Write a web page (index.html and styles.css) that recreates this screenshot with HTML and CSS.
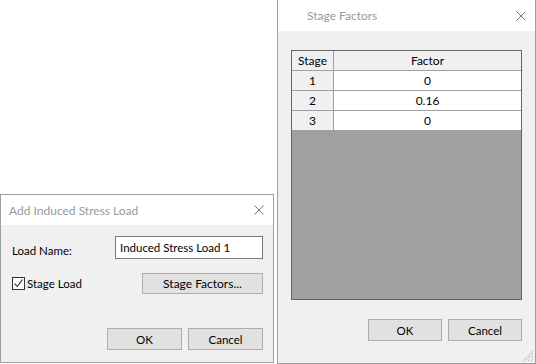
FILE: index.html
```html
<!DOCTYPE html>
<html lang="en">
<head>
    <meta charset="UTF-8">
    <title>Add Induced Stress Load</title>
    <link rel="stylesheet" href="styles.css">
</head>
<body>
    <div class="desktop">
        <div class="window load-window">
            <div class="titlebar">
                <span class="title">Add Induced Stress Load</span>
                <svg class="close" width="10" height="10" viewBox="0 0 10 10"><path d="M0.5 0.5 L9.5 9.5 M9.5 0.5 L0.5 9.5"/></svg>
            </div>
            <div class="body load-body">
                <div class="row name-row">
                    <label class="label">Load Name:</label>
                    <input class="field" type="text" value="Induced Stress Load 1">
                </div>
                <div class="row stage-row">
                    <label class="check">
                        <span class="box"><svg width="11" height="11" viewBox="0 0 11 11"><path d="M1.5 5.5 L4.2 8.5 L9.5 1.5"/></svg></span>
                        Stage Load
                    </label>
                    <button class="btn factors-btn">Stage Factors...</button>
                </div>
                <div class="actions">
                    <button class="btn">OK</button>
                    <button class="btn">Cancel</button>
                </div>
            </div>
        </div>

        <div class="window factors-window">
            <div class="titlebar factors-title">
                <span class="title">Stage Factors</span>
                <svg class="close" width="10" height="10" viewBox="0 0 10 10"><path d="M0.5 0.5 L9.5 9.5 M9.5 0.5 L0.5 9.5"/></svg>
            </div>
            <div class="body factors-body">
                <div class="grid-frame">
                    <div class="grid">
                        <div class="cell head">Stage</div>
                        <div class="cell head">Factor</div>
                        <div class="cell head">1</div>
                        <div class="cell">0</div>
                        <div class="cell head">2</div>
                        <div class="cell">0.16</div>
                        <div class="cell head">3</div>
                        <div class="cell">0</div>
                    </div>
                </div>
                <div class="actions">
                    <button class="btn">OK</button>
                    <button class="btn">Cancel</button>
                </div>
            </div>
            <svg class="grip" width="12" height="12" viewBox="0 0 12 12"><path d="M11 3 L3 11 M11 6 L6 11 M11 9 L9 11 M11 1 L1 11"/></svg>
        </div>
    </div>
</body>
</html>
```

FILE: styles.css
```css
body {
    margin: 0;
    background-color: #fff;
    font-family: Lato, "Noto Sans", sans-serif;
    font-size: 11.5px;
    color: #000;
}
.desktop {
    position: relative;
    width: 536px;
    height: 364px;
    overflow: hidden;
}
.window {
    position: absolute;
    box-sizing: border-box;
    background-color: #f0f0f0;
    border: 1px solid #9d9da5;
    display: flex;
    flex-direction: column;
}
.load-window {
    left: 0;
    top: 194px;
    width: 274px;
    height: 169px;
}
.factors-window {
    left: 277px;
    top: -1px;
    width: 259px;
    height: 365px;
}
.titlebar {
    height: 30px;
    background-color: #fff;
    display: flex;
    align-items: center;
    justify-content: space-between;
    padding: 0 9px 0 8px;
    flex-shrink: 0;
}
.factors-title {
    height: 31px;
    padding-left: 29px;
}
.title {
    font-size: 12px;
    color: #999;
}
.close path {
    stroke: #777;
    stroke-width: 1;
    fill: none;
}
.body {
    flex: 1;
    display: flex;
    flex-direction: column;
}
.load-body {
    padding: 11px 10px 12px 11px;
}
.row {
    display: flex;
    align-items: center;
    justify-content: space-between;
}
.name-row {
    align-items: flex-start;
}
.name-row .label {
    padding-top: 8px;
}
.stage-row {
    margin-top: 14px;
}
.field {
    box-sizing: border-box;
    width: 148px;
    height: 23px;
    border: 1px solid #7a7a7a;
    background: #fff;
    font: inherit;
    padding: 0 4px;
    margin: 0;
    outline: none;
}
.check {
    display: flex;
    align-items: center;
    gap: 2px;
}
.box {
    box-sizing: border-box;
    width: 13px;
    height: 13px;
    border: 1px solid #333;
    background: #fff;
    display: flex;
}
.box svg path {
    stroke: #222;
    stroke-width: 1.1;
    fill: none;
}
.btn {
    box-sizing: border-box;
    width: 75px;
    height: 22px;
    margin: 0;
    padding: 0;
    background-color: #e1e1e1;
    border: 1px solid #adadad;
    font: inherit;
    color: #000;
}
.factors-btn {
    width: 121px;
    height: 21px;
    font-size: 12px;
}
.actions {
    margin-top: auto;
    display: flex;
    justify-content: flex-end;
    gap: 6px;
}
.factors-body {
    padding: 19px 13px 22px 13px;
}
.factors-body .btn {
    width: 74px;
}
.grid-frame {
    box-sizing: border-box;
    height: 250px;
    border: 1px solid #646464;
    background-color: #a0a0a0;
    margin-bottom: 19px;
}
.grid {
    display: grid;
    grid-template-columns: 41px 1fr;
    grid-auto-rows: 19px;
    gap: 1px;
    font-size: 12px;
}
.cell {
    background-color: #fff;
    text-align: center;
    line-height: 19px;
}
.cell.head {
    background-color: #f0f0f0;
}
.grip {
    position: absolute;
    right: 1px;
    bottom: 1px;
}
.grip path {
    stroke: #a8a8a8;
    stroke-width: 1;
    stroke-dasharray: 1 1;
    fill: none;
}
```
